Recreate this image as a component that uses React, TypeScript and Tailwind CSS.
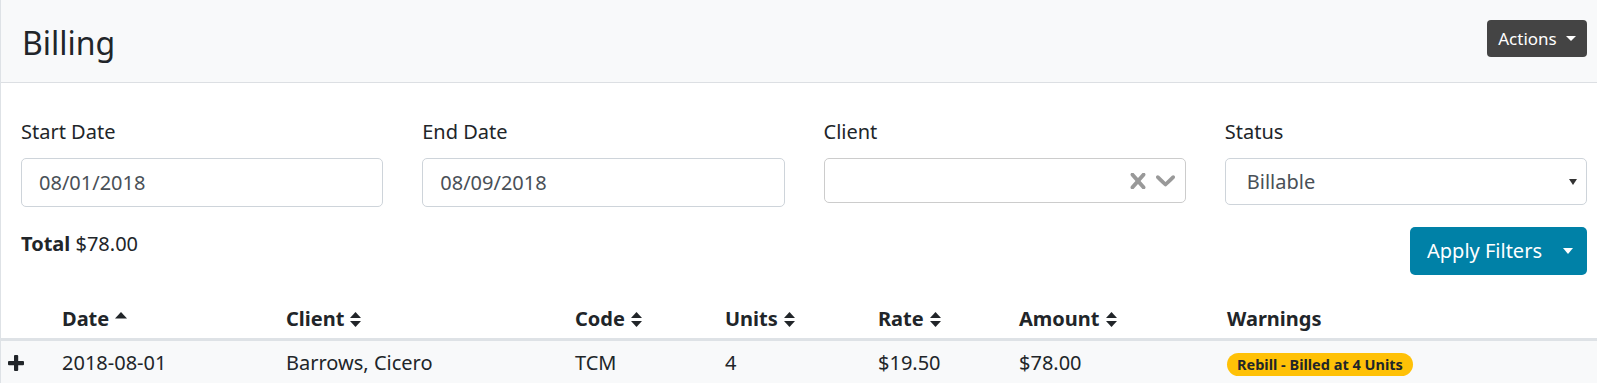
import React from "react";

function SortBoth() {
  return (
    <svg width="11" height="15" viewBox="0 0 11 15" className="inline-block ml-[6px] align-[-1px]">
      <path d="M5.5 0 L11 6 L0 6 Z" fill="#212529" />
      <path d="M5.5 15 L11 9 L0 9 Z" fill="#212529" />
    </svg>
  );
}

function SortUp() {
  return (
    <svg width="12" height="15" viewBox="0 0 12 15" className="inline-block ml-[6px] align-[-1px]">
      <path d="M6 0 L12 6.5 L0 6.5 Z" fill="#212529" />
    </svg>
  );
}

function Plus() {
  return (
    <svg width="16" height="16" viewBox="0 0 16 16">
      <rect x="6" y="0" width="4.2" height="16" rx="1" fill="#212529" />
      <rect x="0" y="6" width="16" height="4.2" rx="1" fill="#212529" />
    </svg>
  );
}

const cols = [
  { label: "Date", w: "w-[224px]", sort: "up" },
  { label: "Client", w: "w-[289px]", sort: "both" },
  { label: "Code", w: "w-[150px]", sort: "both" },
  { label: "Units", w: "w-[153px]", sort: "both" },
  { label: "Rate", w: "w-[141px]", sort: "both" },
  { label: "Amount", w: "w-[208px]", sort: "both" },
  { label: "Warnings", w: "w-[382px]", sort: "none" },
];

export default function App() {
  return (
    <div className="min-h-screen bg-white border-l border-[#dee2e6] text-[#212529] font-['Noto_Sans',sans-serif]">
      <header className="h-[83px] bg-[#f8f9fa] border-b border-[#dcdfe3] flex items-center justify-between pl-[21px] pr-[10px]">
        <h1 className="text-[32px] leading-[40px] font-normal mt-[3px]">Billing</h1>
        <button className="h-[37px] w-[100px] bg-[#444444] text-white text-[17px] rounded-[4px] flex items-center justify-center gap-[9px] mt-[-5px]">
          <span>Actions</span>
          <span className="w-0 h-0 border-l-[5px] border-r-[5px] border-t-[5px] border-l-transparent border-r-transparent border-t-white" />
        </button>
      </header>

      <div className="pl-[20px] pr-[10px] pt-[34px]">
        <div className="grid grid-cols-4 gap-x-[39px]">
          <div>
            <div className="text-[20px] leading-[30px] mb-[11px]">Start Date</div>
            <div className="h-[49px] border border-[#ced4da] rounded-[5px] px-[17px] flex items-center text-[20px] text-[#495057]">
              08/01/2018
            </div>
          </div>
          <div>
            <div className="text-[20px] leading-[30px] mb-[11px]">End Date</div>
            <div className="h-[49px] border border-[#ced4da] rounded-[5px] px-[17px] flex items-center text-[20px] text-[#495057]">
              08/09/2018
            </div>
          </div>
          <div>
            <div className="text-[20px] leading-[30px] mb-[11px]">Client</div>
            <div className="h-[45px] border border-[#cccccc] rounded-[5px] flex items-center justify-end pr-[10px] gap-[10px]">
              <svg width="16" height="16" viewBox="5 5 10 10" fill="#999999">
                <path d="M14.348 14.849c-0.469 0.469-1.229 0.469-1.697 0l-2.651-3.030-2.651 3.029c-0.469 0.469-1.229 0.469-1.697 0-0.469-0.469-0.469-1.229 0-1.697l2.758-3.15-2.759-3.152c-0.469-0.469-0.469-1.228 0-1.697s1.228-0.469 1.697 0l2.652 3.031 2.651-3.031c0.469-0.469 1.228-0.469 1.697 0s0.469 1.229 0 1.697l-2.758 3.152 2.758 3.15c0.469 0.469 0.469 1.229 0 1.698z" />
              </svg>
              <svg width="19" height="12" viewBox="4.2 7.1 11.6 7.2" fill="#999999">
                <path d="M4.516 7.548c0.436-0.446 1.043-0.481 1.576 0l3.908 3.747 3.908-3.747c0.533-0.481 1.141-0.446 1.574 0 0.436 0.445 0.408 1.197 0 1.615-0.406 0.418-4.695 4.502-4.695 4.502-0.217 0.223-0.502 0.335-0.787 0.335s-0.57-0.112-0.789-0.335c0 0-4.287-4.084-4.695-4.502s-0.436-1.170 0-1.615z" />
              </svg>
            </div>
          </div>
          <div>
            <div className="text-[20px] leading-[30px] mb-[11px]">Status</div>
            <div className="h-[47px] border border-[#ced4da] rounded-[5px] pl-[21px] pr-[9px] flex items-center justify-between text-[20px] text-[#495057]">
              <span>Billable</span>
              <span className="w-0 h-0 border-l-[4px] border-r-[4px] border-t-[6px] border-l-transparent border-r-transparent border-t-[#333333]" />
            </div>
          </div>
        </div>

        <div className="flex items-start justify-between mt-[20px]">
          <div className="text-[20px] leading-[30px] mt-[2px]">
            <span className="font-bold">Total</span> $78.00
          </div>
          <button className="h-[48px] w-[177px] bg-[#0081a7] text-white text-[20px] rounded-[5px] flex items-center pl-[17px] pr-[14px] justify-between">
            <span>Apply Filters</span>
            <span className="w-0 h-0 border-l-[5px] border-r-[5px] border-t-[6px] border-l-transparent border-r-transparent border-t-white" />
          </button>
        </div>
      </div>

      <table className="table-fixed w-full mt-[15px] border-collapse text-[20px] leading-[30px]">
        <thead>
          <tr className="border-b-[3px] border-[#dee2e6]">
            <th className="w-[49px]" />
            {cols.map((c) => (
              <th key={c.label} className={`${c.w} text-left font-bold pl-[12px] pt-[14px] pb-[4px] whitespace-nowrap`}>
                {c.label}
                {c.sort === "up" && <SortUp />}
                {c.sort === "both" && <SortBoth />}
              </th>
            ))}
          </tr>
        </thead>
        <tbody>
          <tr className="bg-[#f8f9fa]">
            <td className="pl-[7px] pt-[7px] pb-[8px] align-middle">
              <Plus />
            </td>
            <td className="pl-[12px] pt-[7px] pb-[8px]">2018-08-01</td>
            <td className="pl-[12px] pt-[7px] pb-[8px]">Barrows, Cicero</td>
            <td className="pl-[12px] pt-[7px] pb-[8px]">TCM</td>
            <td className="pl-[12px] pt-[7px] pb-[8px]">4</td>
            <td className="pl-[12px] pt-[7px] pb-[8px]">$19.50</td>
            <td className="pl-[12px] pt-[7px] pb-[8px]">$78.00</td>
            <td className="pl-[12px] pt-[7px] pb-[8px]">
              <span className="inline-flex items-center h-[23px] px-[10px] rounded-full bg-[#ffc107] text-[14.5px] font-bold leading-none text-[#212529]">
                Rebill - Billed at 4 Units
              </span>
            </td>
          </tr>
        </tbody>
      </table>
    </div>
  );
}
